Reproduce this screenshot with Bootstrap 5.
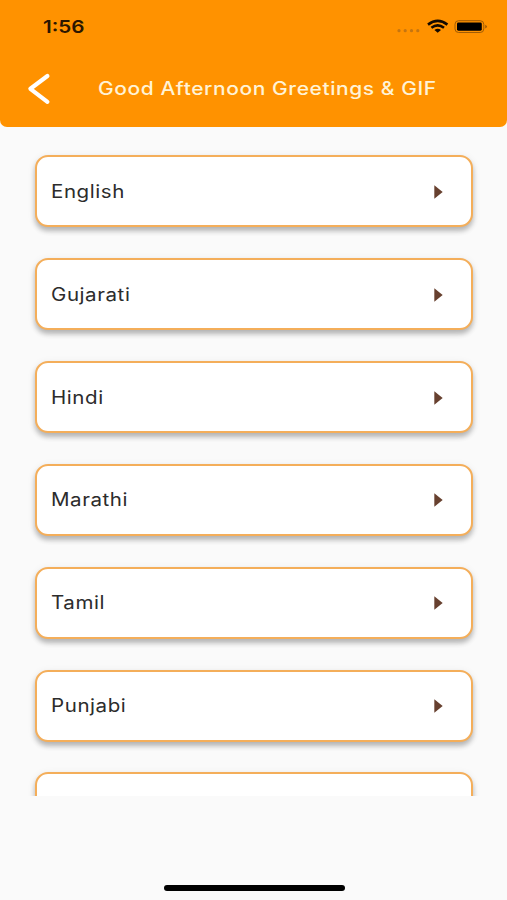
<!DOCTYPE html>
<html lang="en">
<head>
<meta charset="utf-8">
<meta name="viewport" content="width=device-width, initial-scale=1">
<title>Good Afternoon Greetings &amp; GIF</title>
<link href="https://cdn.jsdelivr.net/npm/bootstrap@5.3.0/dist/css/bootstrap.min.css" rel="stylesheet">
<style>
body{background:#fafafa;font-family:Inter,"Liberation Sans",sans-serif;height:900px;overflow:hidden}
.app-head{background:#ff9200;height:127px;border-radius:0 0 7px 7px}
.status{height:53px;padding:0 19px 0 43px}
.wide{display:inline-block;transform-origin:left center;white-space:nowrap;line-height:1}
.clock{font-size:17.5px;font-weight:600;color:#2b1600;transform:scaleX(1.18)}
.title-row{height:71px;padding-left:27px}
.title{font-size:18px;font-weight:500;color:#fff3d6;letter-spacing:.5px;margin:0 0 0 47px;transform:scaleX(1.165)}
.langs{height:669px;overflow:hidden;padding:28.4px 34.5px 0 35px;gap:30.85px}
.lang{flex:0 0 72px;border:2px solid #f4ae5a;border-radius:13px;background:#fff;padding:1px 28px 0 14px;box-shadow:0 4px 5px rgba(0,0,0,.24),0 2px 8px rgba(0,0,0,.08)}
.lang .wide{font-size:18px;color:#2c2c2c;letter-spacing:.5px;transform:scaleX(1.14)}
.home{width:181px;height:5.5px;margin:89px auto 0 163.5px;background:#000}
</style>
</head>
<body>
<header class="app-head">
  <div class="status d-flex align-items-center justify-content-between">
    <span class="wide clock">1:56</span>
    <svg width="92" height="18" viewBox="0 0 92 18" aria-hidden="true">
      <g fill="#c57510"><circle cx="3" cy="12.7" r="1.6"/><circle cx="9.2" cy="12.7" r="1.6"/><circle cx="15.5" cy="12.7" r="1.6"/><circle cx="21.8" cy="12.7" r="1.6"/></g>
      <g fill="none" stroke="#130900" stroke-width="2.6"><path d="M32 6.6Q41.7-.8 51.4 6.6"/><path d="M35.4 9.8Q41.7 5 48 9.8"/></g>
      <path d="M38.4 12Q41.7 9.4 45 12L41.7 14.8Z" fill="#130900"/>
      <rect x="59" y="2.7" width="28.8" height="11.8" rx="3.6" fill="none" stroke="#a05c06" stroke-width="1"/>
      <rect x="61" y="4.5" width="24.8" height="8.2" rx="1.4" fill="#000"/>
      <path d="M89.2 6.7Q93 8.6 89.2 10.5Z" fill="#a05c06"/>
    </svg>
  </div>
  <div class="title-row d-flex align-items-center">
    <svg width="24" height="34" viewBox="0 0 24 34" fill="none" stroke="#fff" stroke-width="4.2" stroke-linecap="round" stroke-linejoin="round" aria-label="Back"><path d="M20.4 4L3.4 16.8L20.4 29.8"/></svg>
    <h1 class="wide title">Good Afternoon Greetings &amp; GIF</h1>
  </div>
</header>
<main class="langs d-flex flex-column">
  <div class="lang d-flex align-items-center justify-content-between"><span class="wide">English</span><svg width="9" height="14" viewBox="0 0 9 14"><path d="M.3.3L8.7 7L.3 13.7Z" fill="#67402f"/></svg></div>
  <div class="lang d-flex align-items-center justify-content-between"><span class="wide">Gujarati</span><svg width="9" height="14" viewBox="0 0 9 14"><path d="M.3.3L8.7 7L.3 13.7Z" fill="#67402f"/></svg></div>
  <div class="lang d-flex align-items-center justify-content-between"><span class="wide">Hindi</span><svg width="9" height="14" viewBox="0 0 9 14"><path d="M.3.3L8.7 7L.3 13.7Z" fill="#67402f"/></svg></div>
  <div class="lang d-flex align-items-center justify-content-between"><span class="wide">Marathi</span><svg width="9" height="14" viewBox="0 0 9 14"><path d="M.3.3L8.7 7L.3 13.7Z" fill="#67402f"/></svg></div>
  <div class="lang d-flex align-items-center justify-content-between"><span class="wide">Tamil</span><svg width="9" height="14" viewBox="0 0 9 14"><path d="M.3.3L8.7 7L.3 13.7Z" fill="#67402f"/></svg></div>
  <div class="lang d-flex align-items-center justify-content-between"><span class="wide">Punjabi</span><svg width="9" height="14" viewBox="0 0 9 14"><path d="M.3.3L8.7 7L.3 13.7Z" fill="#67402f"/></svg></div>
  <div class="lang"></div>
</main>
<div class="home rounded-pill"></div>
<script src="https://cdn.jsdelivr.net/npm/bootstrap@5.3.0/dist/js/bootstrap.bundle.min.js"></script>
</body>
</html>
